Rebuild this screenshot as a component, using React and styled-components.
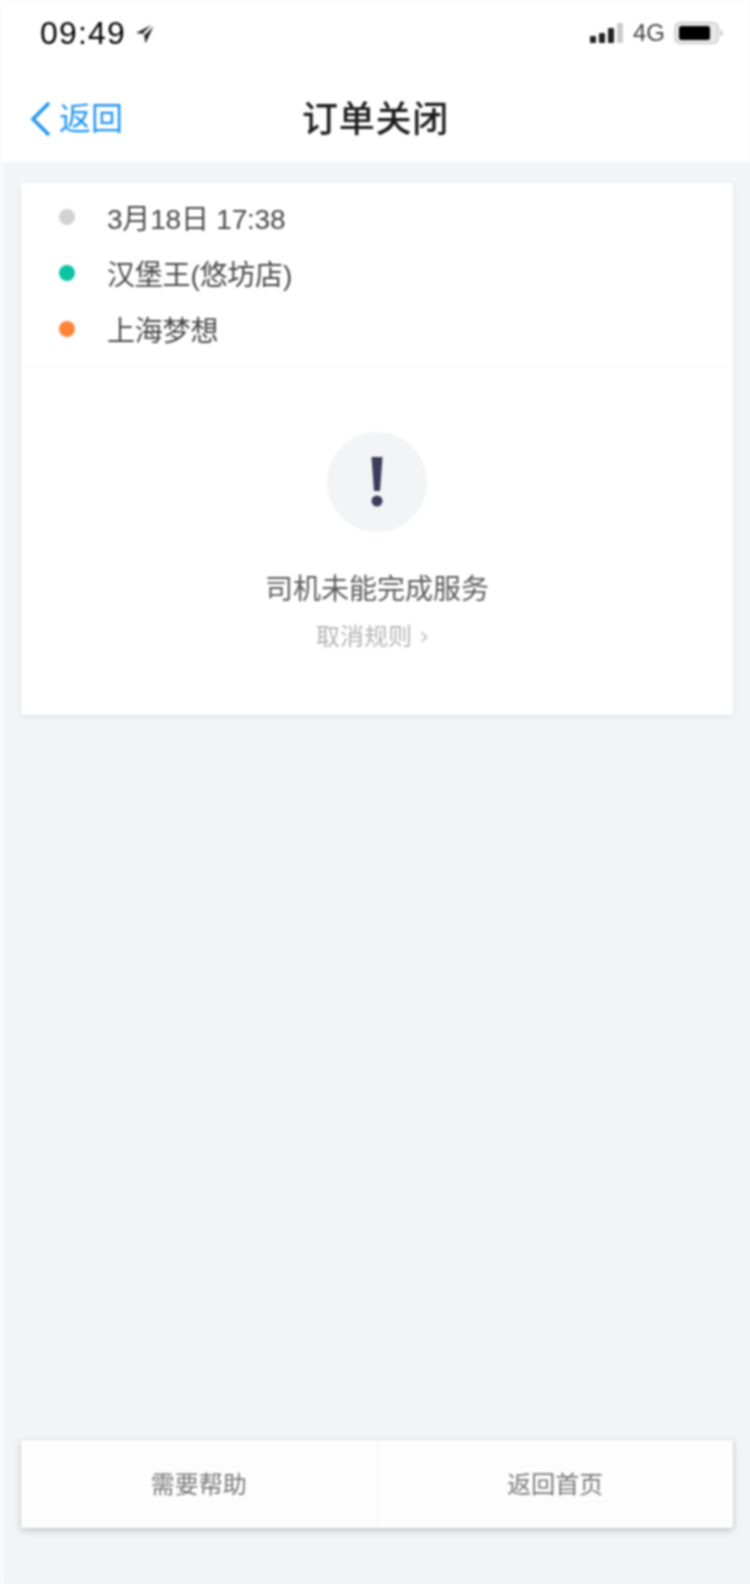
import React from "react";
import styled, { createGlobalStyle } from "styled-components";

const Global = createGlobalStyle`
  html, body { margin: 0; padding: 0; background: #f3f4f6; }
  body { font-family: "Liberation Sans", "Noto Sans CJK SC", sans-serif; }
  * { box-sizing: border-box; }
`;

const Page = styled.div`
  width: 750px;
  height: 1584px;
  display: flex;
  flex-direction: column;
  overflow: hidden;
  background: #f3f4f6;
  filter: blur(0.8px);
`;

const Header = styled.header`
  height: 162px;
  flex: none;
  display: flex;
  flex-direction: column;
  background: #fff;
`;

const StatusBar = styled.div`
  height: 66px;
  padding: 0 26px 0 40px;
  display: flex;
  align-items: center;
  justify-content: space-between;
`;

const Side = styled.div`
  display: flex;
  align-items: center;
  gap: ${(p) => p.$gap || 8}px;
`;

const Clock = styled.span`
  font-size: 32px;
  line-height: 34px;
  letter-spacing: 1.200px;
  color: #000;
`;

const Carrier = styled.span`
  font-size: 24px;
  line-height: 30px;
  color: #444;
`;

const Nav = styled.nav`
  flex: 1;
  display: grid;
  grid-template-columns: 1fr auto 1fr;
  align-items: center;
  padding: 10px 0 0 30px;
`;

const Back = styled.div`
  display: flex;
  align-items: center;
  gap: 7px;
  color: #2196f3;
  font-size: 32px;
  line-height: 40px;
`;

const Title = styled.h1`
  margin: 2px 0 0 -29px;
  font-size: 36px;
  line-height: 50px;
  letter-spacing: 0.800px;
  font-weight: 500;
  color: #1c1c1c;
`;

const Main = styled.main`
  flex: 1;
  display: flex;
  flex-direction: column;
  padding: 21px 17px 56px 21px;
  border-left: 4px solid #fafafb;
`;

const Card = styled.section`
  height: 532px;
  margin-left: -4px;
  background: #fff;
  border-radius: 2px;
  box-shadow: 0 2px 5px rgba(60, 70, 90, 0.1);
  display: flex;
  flex-direction: column;
`;

const Route = styled.ul`
  list-style: none;
  margin: 0;
  padding: 6px 0 9px;
  border-bottom: 1px solid #f7f7f7;
`;

const Stop = styled.li`
  height: 56px;
  padding-left: 38px;
  display: flex;
  align-items: center;
  gap: 32px;
  font-size: 28px;
  letter-spacing: -0.2px;
  color: #484848;
`;

const Dot = styled.span`
  width: 16px;
  height: 16px;
  flex: none;
  border-radius: 50%;
  background: ${(p) => p.$color};
`;

const Notice = styled.div`
  flex: 1;
  display: flex;
  flex-direction: column;
  align-items: center;
  padding-top: 65px;
`;

const Badge = styled.div`
  width: 100px;
  height: 100px;
  border-radius: 50%;
  background: #f3f4f6;
  display: flex;
  align-items: center;
  justify-content: center;
`;

const Reason = styled.p`
  margin: 38px 0 0;
  font-size: 28px;
  line-height: 40px;
  color: #5c5c5c;
`;

const Rules = styled.p`
  margin: 11px 0 0;
  padding-right: 10px;
  display: flex;
  align-items: center;
  gap: 8px;
  font-size: 24px;
  line-height: 32px;
  color: #b4b4b4;
`;

const Footer = styled.footer`
  height: 88px;
  margin: auto 0 0 -4px;
  display: flex;
  background: #fdfdfd;
  border-radius: 2px;
  box-shadow: 0 3px 7px rgba(50, 60, 80, 0.22), 0 0 4px rgba(50, 60, 80, 0.1);
`;

const FooterAction = styled.button`
  flex: 1;
  border: 0;
  background: none;
  padding: 0 0 4px;
  font: inherit;
  font-size: 24px;
  color: #787878;
  & + & { border-left: 1px solid #f6f6f6; }
`;

const stops = [
  { color: "#d2d2d2", text: "3月18日 17:38" },
  { color: "#0cc4a4", text: "汉堡王(悠坊店)" },
  { color: "#ff8336", text: "上海梦想" },
];

export default function App() {
  return (
    <>
      <Global />
      <Page>
        <Header>
          <StatusBar>
            <Side>
              <Clock>09:49</Clock>
              <svg width="22" height="24" viewBox="0 0 22 24" aria-hidden="true">
                <path d="M21 2 2 12l8 1 1.500 9.500z" fill="#222" />
                <path d="M10 13 21 2" stroke="#fff" strokeWidth="2.500" />
              </svg>
            </Side>
            <Side $gap={9}>
              <svg width="34" height="22" viewBox="0 0 34 22" aria-hidden="true">
                <rect x="0" y="14" width="6" height="7" rx="1" fill="#222" />
                <rect x="9" y="11" width="6" height="10" rx="1" fill="#222" />
                <rect x="18" y="6" width="6" height="15" rx="1" fill="#222" />
                <rect x="27" y="1" width="6" height="20" rx="1" fill="#ccc" />
              </svg>
              <Carrier>4G</Carrier>
              <svg width="50" height="24" viewBox="0 0 50 24" aria-hidden="true">
                <rect x="1" y="1.500" width="43" height="21" rx="5" fill="#e8e8e8" stroke="#ccc" strokeWidth="1.500" />
                <rect x="5" y="5" width="31" height="14" rx="2.500" fill="#000" />
                <path d="M46 8.500c2 .5 3 2 3 3.500s-1 3-3 3.500z" fill="#ccc" />
              </svg>
            </Side>
          </StatusBar>
          <Nav>
            <Back>
              <svg width="22" height="36" viewBox="0 0 22 36" aria-hidden="true">
                <path d="M19 2 3 18l16 16" fill="none" stroke="#2196f3" strokeWidth="3.500" />
              </svg>
              返回
            </Back>
            <Title>订单关闭</Title>
          </Nav>
        </Header>
        <Main>
          <Card>
            <Route>
              {stops.map((s) => (
                <Stop key={s.text}>
                  <Dot $color={s.color} />
                  {s.text}
                </Stop>
              ))}
            </Route>
            <Notice>
              <Badge>
                <svg width="16" height="52" viewBox="0 0 16 52" aria-hidden="true">
                  <path d="M2.500 1h11l-2.500 34H5z" fill="#3c3d5a" />
                  <circle cx="8" cy="45" r="5.500" fill="#3c3d5a" />
                </svg>
              </Badge>
              <Reason>司机未能完成服务</Reason>
              <Rules>
                取消规则
                <svg width="8" height="12" viewBox="0 0 8 12" aria-hidden="true">
                  <path d="m1.500 1.500 5 4.500-5 4.500" fill="none" stroke="#b4b4b4" strokeWidth="1.500" />
                </svg>
              </Rules>
            </Notice>
          </Card>
          <Footer>
            <FooterAction>需要帮助</FooterAction>
            <FooterAction>返回首页</FooterAction>
          </Footer>
        </Main>
      </Page>
    </>
  );
}
